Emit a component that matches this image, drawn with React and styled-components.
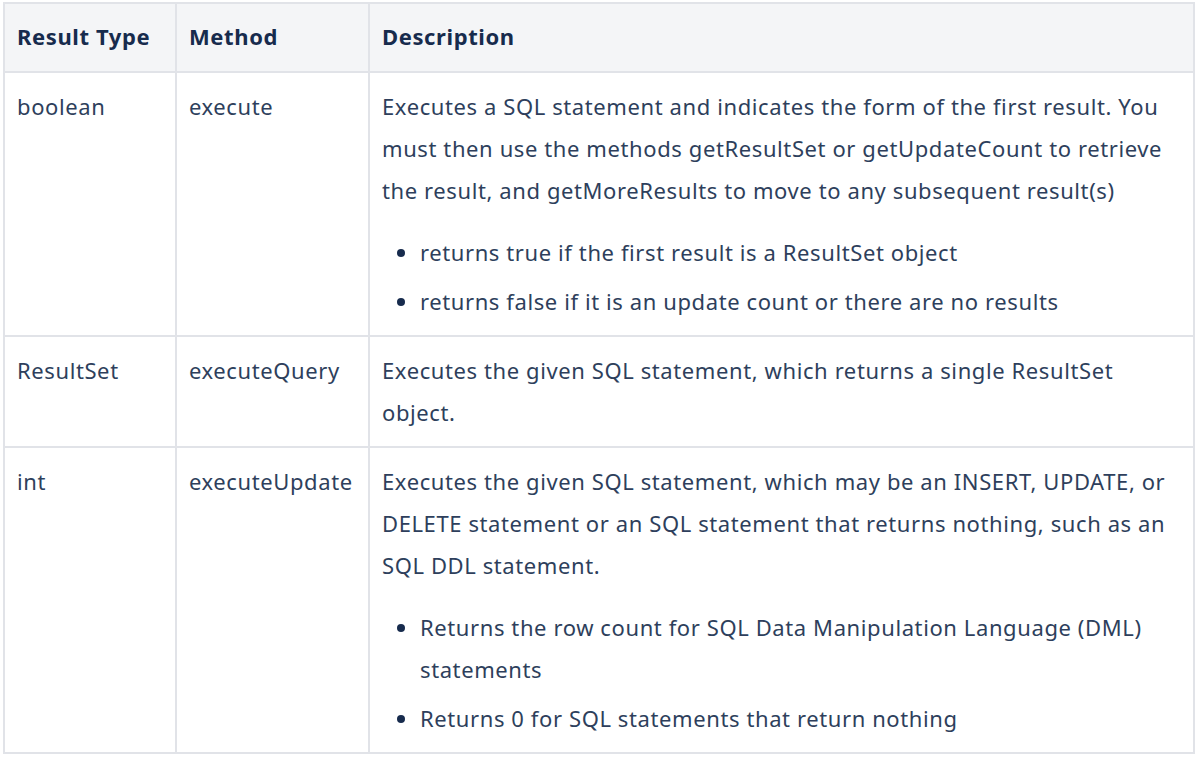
import styled, { createGlobalStyle } from "styled-components"

const GlobalStyle = createGlobalStyle`
  body {
    margin: 0;
    background: #ffffff;
    font-family: "Noto Sans", "Open Sans", sans-serif;
  }
`

const Wrapper = styled.div`
  padding: 2px 0 0 3px;
`

const Table = styled.table`
  width: 1192px;
  border-collapse: collapse;
  table-layout: fixed;
  font-size: 22px;
  line-height: 42px;
  letter-spacing: 0.6px;
  color: #2e3f5c;
  border: 2px solid #e1e3e8;

  th,
  td {
    border: 2px solid #e1e3e8;
    padding: 12px 12px 13px;
    text-align: left;
    vertical-align: top;
  }

  th {
    padding-top: 11px;
    padding-bottom: 14px;
    background: #f4f5f7;
    color: #172b4d;
    font-weight: 700;
    letter-spacing: 0.6px;
  }
`

const Paragraph = styled.p`
  margin: 0;
`

const List = styled.ul`
  margin: 20px 0 0;
  padding-left: 38px;

  li {
    margin-top: 7px;
  }

  li:first-child {
    margin-top: 0;
  }

  li::marker {
    color: #172b4d;
  }
`

const rows = [
  {
    type: "boolean",
    method: "execute",
    text: "Executes a SQL statement and indicates the form of the first result. You must then use the methods getResultSet or getUpdateCount to retrieve the result, and getMoreResults to move to any subsequent result(s)",
    items: [
      "returns true if the first result is a ResultSet object",
      "returns false if it is an update count or there are no results",
    ],
  },
  {
    type: "ResultSet",
    method: "executeQuery",
    text: "Executes the given SQL statement, which returns a single ResultSet object.",
    items: [],
  },
  {
    type: "int",
    method: "executeUpdate",
    text: "Executes the given SQL statement, which may be an INSERT, UPDATE, or DELETE statement or an SQL statement that returns nothing, such as an SQL DDL statement.",
    items: [
      "Returns the row count for SQL Data Manipulation Language (DML) statements",
      "Returns 0 for SQL statements that return nothing",
    ],
  },
]

const App = () => {
  return (
    <Wrapper>
      <GlobalStyle />
      <Table>
        <colgroup>
          <col style={{ width: 172 }} />
          <col style={{ width: 193 }} />
          <col />
        </colgroup>
        <thead>
          <tr>
            <th>Result Type</th>
            <th>Method</th>
            <th>Description</th>
          </tr>
        </thead>
        <tbody>
          {rows.map((row) => (
            <tr key={row.method}>
              <td>{row.type}</td>
              <td>{row.method}</td>
              <td>
                <Paragraph>{row.text}</Paragraph>
                {row.items.length > 0 && (
                  <List>
                    {row.items.map((item) => (
                      <li key={item}>{item}</li>
                    ))}
                  </List>
                )}
              </td>
            </tr>
          ))}
        </tbody>
      </Table>
    </Wrapper>
  )
}

export default App
